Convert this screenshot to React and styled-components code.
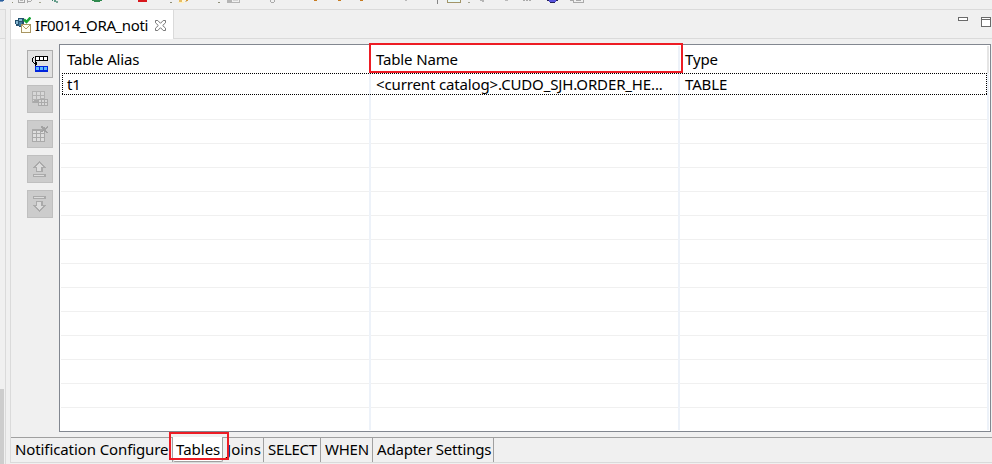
import React from "react";
import styled, { createGlobalStyle } from "styled-components";

const Global = createGlobalStyle`
  * { box-sizing: border-box; }
  body {
    margin: 0;
    overflow: hidden;
    background: #f0f0f0;
    color: #000;
    font: 15px/20px "Noto Sans", "Open Sans", sans-serif;
  }
  svg { display: block; flex: none; shape-rendering: crispEdges; }
`;

const Window = styled.div`
  position: relative;
  display: grid;
  grid-template-rows: 9px 455px;
  width: 992px;
  height: 464px;
  overflow: hidden;
`;

const Toolbar = styled.div`
  display: flex;
  align-items: flex-start;
`;

const Tool = styled.svg`
  margin-left: ${(p) => p.$gap}px;
`;

const Workspace = styled.div`
  display: grid;
  grid-template-columns: 6px 4px 982px;
`;

const SidePanel = styled.div`
  display: flex;
  flex-direction: column;
  justify-content: space-between;
  border-top: 1px solid #dadada;
  border-right: 1px solid #dadada;
`;

const SideHeader = styled.div`
  height: 29px;
  background: #ececec;
  border-bottom: 1px solid #dadada;
`;

const ScrollThumb = styled.div`
  width: 4px;
  height: 75px;
  background: #cdcdcd;
`;

const Editor = styled.div`
  grid-column: 3;
  display: grid;
  grid-template-rows: 29px 398px 25px;
  height: 454px;
  border: solid #dadada;
  border-width: 1px 0 1px 1px;
`;

const TabStrip = styled.div`
  display: flex;
`;

const EditorTab = styled.div`
  display: flex;
  align-items: center;
  width: 162px;
  padding: 1px 0 0 4px;
  background: #fff;
`;

const Title = styled.span`
  width: 112px;
  margin: 0 8px 0 4px;
  white-space: nowrap;
  letter-spacing: -0.39px;
`;

const TabRest = styled.div`
  display: flex;
  flex: 1;
  justify-content: flex-end;
  align-items: flex-start;
  padding-top: 6px;
  gap: 13px;
  border-left: 1px solid #dadada;
  border-bottom: 1px solid #dadada;
`;

const Content = styled.div`
  display: flex;
  align-items: flex-start;
`;

const Actions = styled.div`
  display: flex;
  flex-direction: column;
  gap: 7px;
  width: 48px;
  padding: 11px 0 0 16px;
`;

const Action = styled.button`
  display: block;
  width: 26px;
  height: 28px;
  padding: 0;
  border: 1px solid #adadad;
  background: #e1e1e1;
  &:disabled {
    border-color: #bfbfbf;
    background: #cccccc;
  }
`;

const Table = styled.div`
  width: 932px;
  height: 388px;
  margin-top: 5px;
  padding: 1px 1px 1px 0;
  border: 1px solid #828790;
  background: #fff;
`;

const Columns = styled.div`
  display: grid;
  grid-template-columns: 311px 309px 309px;
  height: ${(p) => p.$height}px;
`;

const Cell = styled.div`
  display: flex;
  align-items: center;
  padding: 0 0 1px 5px;
  border-right: 2px solid ${(p) => (p.$last ? "#e5e5e5" : "#edf2f9")};
  white-space: nowrap;
  letter-spacing: -0.14px;
  &:first-child { padding-left: 7px; }
`;

const HeaderRow = styled(Columns)``;

const DataRow = styled.div`
  position: relative;
`;

const FocusRing = styled.div`
  position: absolute;
  inset: 0 2px 1px 2px;
  --dot: #000 0 1px, transparent 1px 2px;
  background:
    repeating-linear-gradient(90deg, var(--dot)) top / 100% 1px no-repeat,
    repeating-linear-gradient(90deg, var(--dot)) bottom / 100% 1px no-repeat,
    repeating-linear-gradient(180deg, var(--dot)) left / 1px 100% no-repeat,
    repeating-linear-gradient(180deg, var(--dot)) right / 1px 100% no-repeat;
`;

const EmptyRow = styled(Columns)`
  background: linear-gradient(#f0f0f0, #f0f0f0) bottom 0 left 1px / 926px 1px no-repeat;
`;

const PageTabs = styled.div`
  display: flex;
  border-top: 1px solid #a0a0a0;
`;

const PageTab = styled.div`
  width: ${(p) => p.$width}px;
  padding: 1px 0 0 ${(p) => p.$pad}px;
  height: 24px;
  white-space: nowrap;
  letter-spacing: ${(p) => p.$track}px;
  border-right: 1px solid #a0a0a0;
  ${(p) =>
    p.$active &&
    `
    background: #fff;
    margin-top: -1px;
    padding-top: 2px;
    height: 25px;
    border-bottom: 1px solid #a0a0a0;
    border-radius: 0 0 2px 2px;
  `}
`;

const Callout = styled.div`
  position: absolute;
  left: ${(p) => p.$x}px;
  top: ${(p) => p.$y}px;
  width: ${(p) => p.$w}px;
  height: ${(p) => p.$h}px;
  border: 2px solid #ed1c24;
`;

// Lower edges of the toolbar icons: gap before, width, then [x, y, w, h, fill] blocks.
const tools = [
  [0, 4, [[0, 0, 4, 1, "#2c5f9e"], [0, 1, 3, 1, "#7698c0"]]],
  [7, 2, [[1, 2, 1, 1, "#8f8f78"]]],
  [5, 14, [[0, 0, 1, 3, "#a5a5a5"], [6, 0, 1, 3, "#a5a5a5"], [0, 2, 7, 1, "#a5a5a5"], [2, 0, 3, 1, "#b5b5b5"], [9, 0, 1, 3, "#ababab"], [10, 1, 3, 1, "#ababab"], [13, 0, 1, 1, "#ababab"]]],
  [7, 2, [[0, 2, 2, 1, "#a6a692"]]],
  [11, 6, [[0, 0, 1, 1, "#37806c"], [2, 0, 2, 2, "#5e9b87"], [4, 1, 2, 2, "#79a697"]]],
  [34, 10, [[0, 0, 10, 1, "#2f8a4e"], [2, 1, 6, 1, "#2f8a4e"]]],
  [36, 9, [[0, 0, 9, 2, "#d8171c"]]],
  [23, 2, [[0, 2, 2, 1, "#8f8f78"]]],
  [6, 12, [[1, 0, 3, 2, "#e8bd64"], [0, 2, 6, 1, "#fff1c0"], [4, 0, 3, 2, "#fff6db"], [8, 0, 2, 1, "#d49a35"], [7, 1, 2, 1, "#d8c9ad"]]],
  [28, 2, [[0, 2, 2, 1, "#8f8f78"]]],
  [7, 13, [[0, 0, 5, 3, "#b5b5b5"], [5, 2, 8, 1, "#b5b5b5"], [12, 0, 1, 3, "#b5b5b5"], [6, 0, 5, 1, "#d4d4d4"]]],
  [30, 5, [[0, 0, 1, 2, "#aaa"], [4, 0, 1, 2, "#aaa"], [1, 2, 3, 1, "#aaa"]]],
  [39, 4, [[0, 0, 3, 1, "#c77b20"]]],
  [20, 4, [[0, 0, 3, 1, "#c77b20"]]],
  [18, 4, [[0, 0, 3, 1, "#c77b20"]]],
  [41, 4, [[0, 0, 2, 1, "#b9b9b9"]]],
  [28, 1, [[0, 0, 1, 4, "#858585"]]],
  [9, 14, [[0, 0, 14, 3, "#a29468"], [1, 0, 12, 2, "#e9fafa"]]],
  [7, 2, [[0, 2, 2, 1, "#a6a692"]]],
  [10, 5, [[0, 0, 4, 1, "#b5b5b5"], [2, 1, 2, 1, "#b5b5b5"]]],
  [20, 5, [[0, 0, 3, 1, "#b9b9b9"]]],
  [13, 8, [[0, 0, 2, 1, "#aaa"], [3, 0, 2, 1, "#aaa"], [6, 0, 2, 1, "#aaa"]]],
  [16, 11, [[0, 0, 11, 1, "#25215c"], [2, 0, 7, 2, "#5753dc"], [3, 2, 5, 1, "#25215c"]]],
  [12, 14, [[0, 0, 4, 1, "#aaa"], [3, 0, 11, 3, "#aaa"], [4, 0, 9, 2, "#f0f0f0"], [6, 0, 5, 1, "#aaa"]]],
];

const ToolIcon = ({ gap, width, blocks }) => (
  <Tool $gap={gap} width={width} height="5">
    {blocks.map(([x, y, w, h, fill], i) => (
      <rect key={i} x={x} y={y} width={w} height={h} fill={fill} />
    ))}
  </Tool>
);

const FileIcon = () => (
  <svg width="16" height="16">
    <path d="M0 3h3V1h6v9H4V9H1V7H0z" fill="#24506f" />
    <path d="M1 4h2v3H1zM4 2h3v2H4z" fill="#86b8d3" />
    <path d="M4 5h3v4H4z" fill="#3f7ba0" />
    <path d="M6.5 7.5h9v8h-9z" fill="#fffdf2" stroke="#a89561" />
    <path d="m7 8 4 4 4-4" fill="none" stroke="#b29b63" shapeRendering="auto" />
    <path d="m9 2.5 2.5 2.5L15.5.5" fill="none" stroke="#16a536" strokeWidth="2.5" shapeRendering="auto" />
  </svg>
);

const CloseIcon = () => (
  <svg width="11" height="11">
    <path
      d="M.5.5h2.3l2.7 2.8L8.2.5h2.3v2.3L7.7 5.5l2.8 2.7v2.3H8.2L5.5 7.7l-2.7 2.8H.5V8.2l2.8-2.7L.5 2.8z"
      fill="#fff" stroke="#777" shapeRendering="auto"
    />
  </svg>
);

const Glyph = ({ children }) => <svg width="24" height="26">{children}</svg>;

const AddTableIcon = () => (
  <Glyph>
    <path d="M7 5h13v5H7z" fill="#000" />
    <path d="M8 6h3v3H8zM12 6h3v3h-3zM16 6h3v3h-3z" fill="#fff" />
    <path d="M7 15h13v6H7z" fill="#0024dc" />
    <path d="M8 16h3v3H8zM12 16h3v3h-3zM16 16h3v3h-3z" fill="#5ebcff" />
    <path d="M5 6h1v1H5zM4 7h1v4H4zM5 11h1v1H5zM6 12h3v1H6zM8 11h1v3H8zM7 10h1v5H7z" fill="#000" />
  </Glyph>
);

const GridCopyIcon = () => (
  <Glyph>
    <path d="M4 5h13v12H4z" fill="#b2b2b2" />
    <path d="M5 6h3v3H5zM9 6h3v3H9zM13 6h3v3h-3zM5 10h3v3H5zM9 10h3v3H9zM13 10h3v2h-3zM5 14h2v2H5z" fill="#d7d7d7" />
    <path d="M10 13h10v7H10zM6 14h4v2H6zM5 15h6v2H5z" fill="#aaa" />
    <path d="M11 14h2v2h-2zM14 14h2v2h-2zM17 14h2v2h-2zM11 17h2v2h-2zM14 17h2v2h-2zM17 17h2v2h-2z" fill="#d7d7d7" />
  </Glyph>
);

const GridDeleteIcon = () => (
  <Glyph>
    <path d="M4 8h13v13H4z" fill="#aaa" />
    <path d="M5 10h3v2H5zM9 10h3v2H9zM13 10h3v2h-3zM5 13h3v3H5zM9 13h3v3H9zM13 13h3v3h-3zM5 17h3v3H5zM9 17h3v3H9zM13 17h3v3h-3z" fill="#dedede" />
    <path d="M13 5h2v1h2v1h1V6h1V5h1v2h-1v1h-1v2h1v1h1v1h-2v-1h-2v-1h-1v1h-2v-1h1V9h1V8h-1V7h-1z" fill="#a2a2a2" />
  </Glyph>
);

const MoveArrow = () => (
  <>
    <path d="M11 5h1v1h1v1h1v1h1v1h1v1h1v1h1v1h-3v4H8v-4H5v-1h1v-1h1V9h1V8h1V7h1V6h1z" fill="#aaa" />
    <path d="M11 7h1v1h1v1h1v1h1v1h-2v4H9v-4H8v-1h1V9h1V8h1z" fill="#dcdcdc" />
    <path d="M5 18h13v3H5z" fill="#aaa" />
    <path d="M6 19h10v1H6z" fill="#dcdcdc" />
  </>
);

const MoveUpIcon = () => <Glyph><MoveArrow /></Glyph>;
const MoveDownIcon = () => (
  <Glyph><g transform="matrix(1 0 0 -1 0 26)"><MoveArrow /></g></Glyph>
);

const pages = [
  ["Notification Configure", 162, 4, -0.1],
  ["Tables", 50, 3, 0, true],
  ["Joins", 41, 4, 0.1],
  ["SELECT", 57, 4, -0.3],
  ["WHEN", 52, 4, -0.25],
  ["Adapter Settings", 121, 4, -0.2],
];

export default function App() {
  return (
    <Window>
      <Global />
      <Toolbar>
        {tools.map(([gap, width, blocks], i) => (
          <ToolIcon key={i} gap={gap} width={width} blocks={blocks} />
        ))}
      </Toolbar>
      <Workspace>
        <SidePanel>
          <SideHeader />
          <ScrollThumb />
        </SidePanel>
        <Editor>
          <TabStrip>
            <EditorTab>
              <FileIcon />
              <Title>IF0014_ORA_noti</Title>
              <CloseIcon />
            </EditorTab>
            <TabRest>
              <svg width="10" height="5"><path d="M.5 1.5h9v3h-9z" fill="#fff" stroke="#6a6a6a" /></svg>
              <svg width="11" height="12"><path d="M.5 1.5h9v9h-9zM0 3.5h10" fill="#fff" stroke="#6a6a6a" /></svg>
            </TabRest>
          </TabStrip>
          <Content>
            <Actions>
              <Action><AddTableIcon /></Action>
              <Action disabled><GridCopyIcon /></Action>
              <Action disabled><GridDeleteIcon /></Action>
              <Action disabled><MoveUpIcon /></Action>
              <Action disabled><MoveDownIcon /></Action>
            </Actions>
            <Table>
              <HeaderRow $height={27}>
                <Cell>Table Alias</Cell>
                <Cell>Table Name</Cell>
                <Cell $last>Type</Cell>
              </HeaderRow>
              <DataRow>
                <Columns $height={23}>
                  <Cell>t1</Cell>
                  <Cell>&lt;current catalog&gt;.CUDO_SJH.ORDER_HE...</Cell>
                  <Cell>TABLE</Cell>
                </Columns>
                <FocusRing />
              </DataRow>
              {Array.from({ length: 13 }, (_, i) => (
                <EmptyRow key={i} $height={24}>
                  <Cell /><Cell /><Cell />
                </EmptyRow>
              ))}
              <Columns $height={22}>
                <Cell /><Cell /><Cell />
              </Columns>
            </Table>
          </Content>
          <PageTabs>
            {pages.map(([label, width, pad, track, active]) => (
              <PageTab key={label} $width={width} $pad={pad} $track={track} $active={active}>
                {label}
              </PageTab>
            ))}
          </PageTabs>
        </Editor>
      </Workspace>
      <Callout $x={369} $y={43} $w={314} $h={30} />
      <Callout $x={169} $y={432} $w={60} $h={28} />
    </Window>
  );
}
